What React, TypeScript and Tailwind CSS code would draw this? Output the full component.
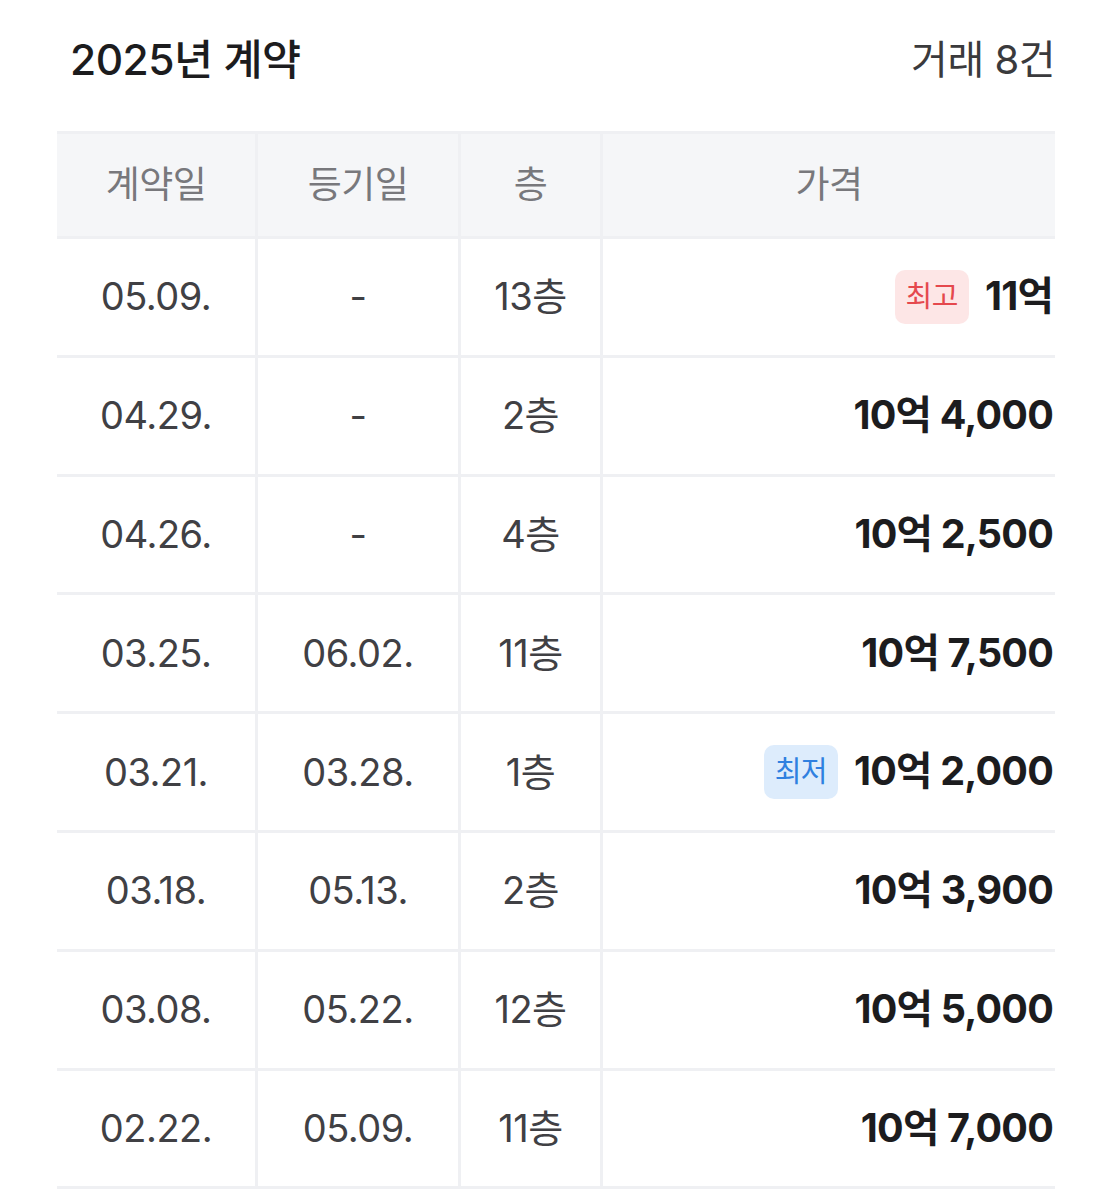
const rows = [
  { contract: '05.09.', reg: '-', floor: '13층', price: '11억', tag: 'high' },
  { contract: '04.29.', reg: '-', floor: '2층', price: '10억 4,000' },
  { contract: '04.26.', reg: '-', floor: '4층', price: '10억 2,500' },
  { contract: '03.25.', reg: '06.02.', floor: '11층', price: '10억 7,500' },
  { contract: '03.21.', reg: '03.28.', floor: '1층', price: '10억 2,000', tag: 'low' },
  { contract: '03.18.', reg: '05.13.', floor: '2층', price: '10억 3,900' },
  { contract: '03.08.', reg: '05.22.', floor: '12층', price: '10억 5,000' },
  { contract: '02.22.', reg: '05.09.', floor: '11층', price: '10억 7,000' },
];

const font = { fontFamily: 'Inter, "Noto Sans CJK KR", sans-serif' };

export default function App() {
  return (
    <div className="w-[1112px] min-h-[1194px] bg-white pl-[57px] pr-[57px]" style={font}>
      <div className="flex items-center justify-between h-[120px] pl-[13px]">
        <h2 className="text-[42.5px] font-medium tracking-[-0.5px] text-[#1c1c1e]">2025년 계약</h2>
        <span className="text-[40px] tracking-[-0.5px] text-[#3a3a3c]">거래 8건</span>
      </div>

      <div className="flex border-y-[3px] border-[#eff0f3] bg-[#f5f6f8] h-[108px] mt-[11px] text-[37px] text-[#78787c] tracking-[-0.5px]">
        <div className="w-[201px] border-r-[3px] border-[#eff0f3] flex items-center justify-center">계약일</div>
        <div className="w-[203px] border-r-[3px] border-[#eff0f3] flex items-center justify-center">등기일</div>
        <div className="w-[142px] border-r-[3px] border-[#eff0f3] flex items-center justify-center">층</div>
        <div className="flex-1 flex items-center justify-center">가격</div>
      </div>

      {rows.map((r) => (
        <div
          key={r.contract}
          className="flex h-[118.8px] border-b-[3px] border-[#eff0f3] text-[38px] text-[#404044] tracking-[-0.5px]"
        >
          <div className="w-[201px] border-r-[3px] border-[#eff0f3] flex items-center justify-center">{r.contract}</div>
          <div className="w-[203px] border-r-[3px] border-[#eff0f3] flex items-center justify-center">{r.reg}</div>
          <div className="w-[142px] border-r-[3px] border-[#eff0f3] flex items-center justify-center">{r.floor}</div>
          <div className="flex-1 flex items-center justify-end gap-[16px] pr-[2px]">
            {r.tag === 'high' && (
              <span className="h-[54px] px-[11px] rounded-[10px] bg-[#fde6e6] text-[#e5484d] text-[29px] flex items-center">최고</span>
            )}
            {r.tag === 'low' && (
              <span className="h-[54px] px-[11px] rounded-[10px] bg-[#ddecfc] text-[#2f80e0] text-[29px] flex items-center">최저</span>
            )}
            <span className="text-[39.5px] font-bold text-[#1c1c1e] tracking-[-0.8px]">{r.price}</span>
          </div>
        </div>
      ))}
    </div>
  );
}
